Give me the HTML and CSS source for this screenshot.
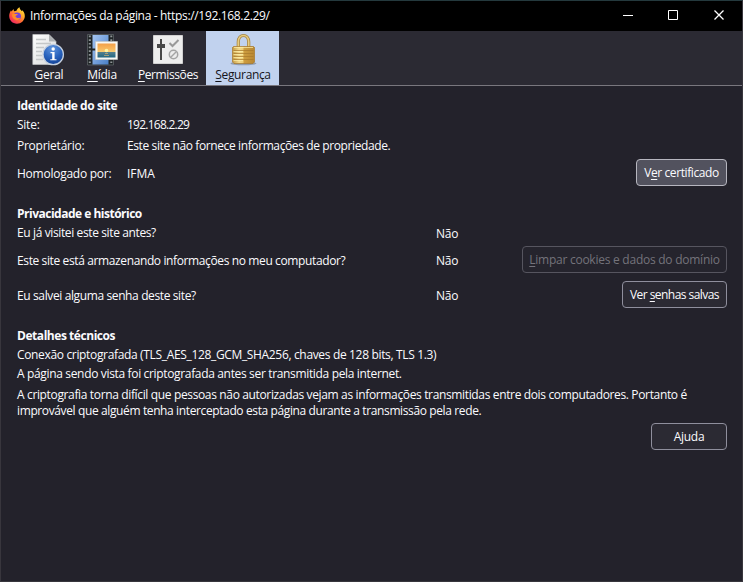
FILE: index.html
```html
<!DOCTYPE html>
<html lang="pt-BR">
<head>
<meta charset="utf-8">
<title>Informações da página</title>
<link rel="stylesheet" href="styles.css">
</head>
<body>
<div class="window">
  <header class="titlebar">
    <svg class="logo" width="16" height="17" viewBox="0 0 16 17">
      <defs>
        <linearGradient id="fox" x1="1" y1="0" x2="0.2" y2="1"><stop offset="0" stop-color="#fff04a"/><stop offset=".35" stop-color="#ffb52b"/><stop offset=".65" stop-color="#ff6634"/><stop offset="1" stop-color="#ee1f65"/></linearGradient>
      </defs>
      <path fill="url(#fox)" d="M2 3.2 2.6 4.5 4.5 2 5 4.3C6.2 4 7 3.5 7.5 3.8 8 2 9.5.6 10.6.3 10.4 2 12 3 12.8 4.2L13.2 3.2C15 4.8 16 7 15.8 9.5 15.5 13.6 12.2 16.7 8 16.7 3.5 16.7.2 13.3.2 9 .2 6.6 1 5 2 3.2Z"/>
      <circle cx="8.2" cy="9.2" r="3.8" fill="#7543d5"/>
      <path fill="#ff8a28" d="M3.2 7C5 6.2 6.5 7 8.8 7.1 8.6 8.4 7 8.3 6.5 9.3 7 11.4 10 11.5 11.4 10.2 10.8 13 7.8 13.8 5.7 12.6 3.5 11.4 2.8 9 3.2 7Z"/>
    </svg>
    <h1 class="caption">Informações da página - https://192.168.2.29/</h1>
    <svg class="controls" width="102" height="11" viewBox="0 0 102 11" fill="none" stroke="#fff">
      <path d="M0 5.5H10M45.5.5H54.5V9.500H45.5Z"/>
      <path stroke-width="1.3" d="M91.500.5 100.500 9.500M100.500.5 91.500 9.500"/>
    </svg>
  </header>

  <nav class="toolbar">
    <div class="tab tab-general">
      <svg width="34" height="34" viewBox="0 0 34 34">
        <defs>
          <linearGradient id="paper" x2="1" y2="1"><stop stop-color="#fff"/><stop offset="1" stop-color="#d5d7d8"/></linearGradient>
          <radialGradient id="info" cx=".45" cy=".2" r=".85"><stop stop-color="#6196dd"/><stop offset=".55" stop-color="#2862bd"/><stop offset="1" stop-color="#113d91"/></radialGradient>
        </defs>
        <path fill="url(#paper)" stroke="#c8cacb" stroke-width=".6" d="M.8 1.500H17L24 8.500V31.500H.8Z"/>
        <path fill="#aeb1b3" d="M17 1.500V8.500H24Z"/>
        <path stroke="#c4c7c8" stroke-width="1.4" d="M4 6.500H14M4 10.500H19M4 14.500H12M4 18.500H10M4 22.500H10M4 26.500H11"/>
        <circle cx="21.200" cy="21.500" r="10.200" fill="url(#info)" stroke="#c5d0df" stroke-width="1.300"/>
        <circle cx="21.200" cy="16" r="1.700" fill="#fff"/>
        <path fill="#fff" d="M18.500 19H22.600V26.200H24.500V27.300H18.300V26.200H20.200V20.200H18.500Z"/>
      </svg>
      <span class="label"><u>G</u>eral</span>
    </div>
    <div class="tab tab-media">
      <svg width="34" height="34" viewBox="0 0 34 34">
        <defs>
          <linearGradient id="frame" y2="1" x2="1"><stop stop-color="#a4c4f2"/><stop offset="1" stop-color="#4a7fc6"/></linearGradient>
          <linearGradient id="sky" x2="0" y2="1"><stop stop-color="#f2a04a"/><stop offset=".35" stop-color="#f8b75c"/><stop offset=".6" stop-color="#f6cc76"/><stop offset=".64" stop-color="#527f8e"/><stop offset="1" stop-color="#216783"/></linearGradient>
        </defs>
        <path fill="#202527" stroke="#62686b" stroke-width=".7" d="M2.500 1.500H28.500V32H2.500Z"/>
        <path stroke="#8f9597" stroke-width="2" stroke-dasharray="1.700 2" d="M4.800 2.500V32M26.300 2.500V32"/>
        <path fill="url(#frame)" d="M7.500 2H23.500V15.500H7.500ZM7.500 17.500H23.500V31.500H7.500Z"/>
        <path fill="#f7f7f3" stroke="#c8c8c2" stroke-width=".6" d="M10.500 8.500H32.500V26.500H10.500Z"/>
        <path fill="url(#sky)" d="M12.500 10.500H30.500V24.500H12.500Z"/>
        <circle cx="21.500" cy="17.500" r="1.800" fill="#fff4a4"/>
        <path stroke="#e7ba71" stroke-width=".6" d="M20 20.500H23M19 22.500H24"/>
      </svg>
      <span class="label"><u>M</u>ídia</span>
    </div>
    <div class="tab tab-permissions">
      <svg width="34" height="34" viewBox="0 0 34 34">
        <path fill="#ededed" stroke="#d0d0d0" d="M2.500 2.500H31.500V30.500H2.500Z"/>
        <path stroke="#484848" stroke-width="2" d="M10 6V27"/>
        <path stroke="#484848" stroke-width="4" d="M6 13H14"/>
        <path stroke="#999" stroke-width="2" fill="none" d="M18.500 10 21.500 13 27.500 7"/>
        <circle cx="22.500" cy="21.500" r="4.200" stroke="#a5a5a5" stroke-width="1.500" fill="none"/>
        <path stroke="#a5a5a5" stroke-width="1.500" d="M19.500 24.500 25.500 18.500"/>
      </svg>
      <span class="label"><u>P</u>ermissões</span>
    </div>
    <div class="tab tab-security selected">
      <svg width="34" height="34" viewBox="0 0 34 34">
        <defs>
          <linearGradient id="brass" x2="1"><stop stop-color="#c39a43"/><stop offset=".3" stop-color="#f1d88c"/><stop offset=".48" stop-color="#edcd75"/><stop offset=".52" stop-color="#cf9e40"/><stop offset="1" stop-color="#b78632"/></linearGradient>
        </defs>
        <ellipse cx="17.500" cy="30.500" rx="13" ry="1.700" fill="#727984" opacity=".6"/>
        <path fill="none" stroke="#a58340" stroke-width="3.200" d="M12.300 17V9C12.300.3 22.700.3 22.700 9V17"/>
        <path fill="none" stroke="#e6cc80" stroke-width="1.700" d="M12.300 17V9C12.300.3 22.700.3 22.700 9V17"/>
        <path fill="url(#brass)" stroke="#a7792b" stroke-width=".7" d="M7.500 13.500H27.500L28.500 14.500V29L27 30.500H8L6.500 29V14.500Z"/>
        <path stroke="#a8782b" stroke-width=".7" d="M7.500 17.500H27.500M7.500 20.500H27.500M7.500 23.500H27.500M7.500 26.500H27.500"/>
        <path stroke="#fff0a9" stroke-width=".7" d="M8 14.500H27M7.500 18.500H17M7.500 21.500H17M7.500 24.500H17M7.500 27.500H17"/>
      </svg>
      <span class="label"><u>S</u>egurança</span>
    </div>
  </nav>

  <main class="panel">
    <section class="identity">
      <h2>Identidade do site</h2>
      <div class="row row-site"><span class="name">Site:</span><span class="numeric">192.168.2.29</span></div>
      <div class="row row-owner"><span class="name">Proprietário:</span><span class="owner">Este site não fornece informações de propriedade.</span></div>
      <div class="row row-verifier"><span class="name">Homologado por:</span><span class="verifier">IFMA</span><button class="primary btn-cert">V<u>e</u>r certificado</button></div>
    </section>

    <section class="privacy">
      <h2>Privacidade e histórico</h2>
      <div class="row row-visits"><span class="question">Eu já visitei este site antes?</span><span class="answer">Não</span></div>
      <div class="row row-cookies"><span class="question">Este site está armazenando informações no meu computador?</span><span>Não</span><button class="btn-clear" disabled><u>L</u>impar cookies e dados do domínio</button></div>
      <div class="row row-passwords"><span class="question">Eu salvei alguma senha deste site?</span><span>Não</span><button class="btn-passwords">Ver <u>s</u>enhas salvas</button></div>
    </section>

    <section class="technical">
      <h2>Detalhes técnicos</h2>
      <p class="cipher">Conexão criptografada (TLS_AES_128_GCM_SHA256, chaves de 128 bits, TLS 1.3)</p>
      <p class="sent">A página sendo vista foi criptografada antes ser transmitida pela internet.</p>
      <p class="explain">A criptografia torna difícil que pessoas não autorizadas vejam as informações transmitidas entre dois computadores. Portanto é<br><span class="tail">improvável que alguém tenha interceptado esta página durante a transmissão pela rede.</span></p>
    </section>
    <button class="btn-help">Ajuda</button>
  </main>
</div>
</body>
</html>
```
FILE: styles.css
```css
* { box-sizing: border-box; }
body { margin: 0; background: #23222b; color: #fbfbfe; font: 12px/16px "Open Sans", "Noto Sans", sans-serif; letter-spacing: -0.25px; }
h1, h2, p { margin: 0; font-size: 12px; }
u { text-decoration-thickness: 1px; text-underline-offset: 2px; }
.window { width: 743px; height: 582px; border: 1px solid #38363d; border-top-color: #24393d; }
.titlebar { height: 30px; background: #000; display: flex; align-items: center; padding: 0 17px 0 8px; }
.logo { margin-top: -2px; }
.caption { font-weight: 400; margin-left: 5px; flex: 1; white-space: nowrap; letter-spacing: -0.33px; }
.controls { display: block; margin-top: -1px; }
.toolbar { height: 55px; background: #2b2a33; border-bottom: 1px solid #79777e; padding-left: 22px; display: flex; }
.tab { height: 54px; display: flex; flex-direction: column; align-items: center; padding-top: 2px; }
.tab svg { flex: none; display: block; }
.label { line-height: 16px; white-space: nowrap; padding-left: 1px; }
.tab-general { width: 51px; }
.tab-media { width: 55px; }
.tab-permissions { width: 77px; }
.tab-permissions .label { letter-spacing: -0.4px; }
.tab-security .label { letter-spacing: -0.35px; }
.tab-security { width: 73px; }
.selected { background: #c1d2ee; color: #15141a; }
.panel { padding: 11px 15px 0 16px; display: flex; flex-direction: column; }
h2 { font-weight: 700; height: 18px; line-height: 18px; letter-spacing: -0.45px; }
.privacy h2 { letter-spacing: -0.5px; }
.row { display: flex; align-items: center; white-space: nowrap; }
.name { width: 110px; }
.numeric { letter-spacing: -0.75px; }
.owner { letter-spacing: -0.39px; }
.verifier { letter-spacing: 0; }
.question { width: 419px; letter-spacing: -0.38px; }
.answer { padding-top: 2px; }
.row-site { height: 20px; }
.row-owner { height: 22px; }
.row-verifier { height: 34px; }
.privacy { margin-top: 14px; }
.row-visits { height: 20px; }
.row-cookies { height: 36px; }
.row-passwords { height: 34px; }
.technical { margin-top: 14px; white-space: nowrap; }
.cipher, .sent { height: 19px; line-height: 20px; letter-spacing: -0.34px; }
.explain { margin-top: 4px; letter-spacing: -0.355px; }
.tail { letter-spacing: -0.38px; }
button { height: 27px; margin: -3px 0 0 auto; padding: 0; border: 1px solid #8f8f9d; border-radius: 4px; background: #2b2a33; color: #fbfbfe; font: inherit; letter-spacing: inherit; white-space: nowrap; }
.primary { background: #52525e; border-color: #b6b6bf; }
button:disabled { background: #25242d; border-color: #56555f; color: #74737b; }
.btn-cert { width: 91px; letter-spacing: -0.4px; }
.btn-clear { width: 205px; }
.btn-passwords { width: 105px; letter-spacing: -0.55px; }
.btn-help { width: 76px; margin-top: 4px; }
```
